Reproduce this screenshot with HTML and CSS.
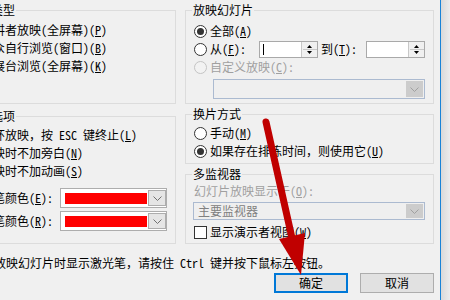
FILE: index.html
```html
<!DOCTYPE html>
<html lang="zh-CN">
<head>
<meta charset="utf-8">
<title>设置放映方式</title>
<link rel="stylesheet" href="styles.css">
</head>
<body>
<div class="screen">
  <div class="dialog">
    <div class="cols">
      <div class="col">
        <fieldset class="group g-type">
          <legend>放映类型</legend>
          <div class="row"><span class="radio checked"></span><span>演讲者放映(全屏幕)(<u>P</u>)</span></div>
          <div class="row"><span class="radio"></span><span>观众自行浏览(窗口)(<u>B</u>)</span></div>
          <div class="row"><span class="radio"></span><span>在展台浏览(全屏幕)(<u>K</u>)</span></div>
        </fieldset>
        <fieldset class="group g-opts">
          <legend>放映选项</legend>
          <div class="row"><span class="check"></span><span>循环放映，按 ESC 键终止(<u>L</u>)</span></div>
          <div class="row"><span class="check"></span><span>放映时不加旁白(<u>N</u>)</span></div>
          <div class="row"><span class="check"></span><span>放映时不加动画(<u>S</u>)</span></div>
          <div class="color-row first">
            <span class="lbl">绘图笔颜色(<u>E</u>):</span>
            <span class="color-pick"><span class="swatch"></span><span class="cp-btn"><svg width="9" height="5" viewBox="0 0 9 5"><path d="M0.5 0.5 L4.5 4.5 L8.5 0.5" fill="none" stroke="#707070" stroke-width="1"/></svg></span></span>
          </div>
          <div class="color-row">
            <span class="lbl">激光笔颜色(<u>R</u>):</span>
            <span class="color-pick"><span class="swatch"></span><span class="cp-btn"><svg width="9" height="5" viewBox="0 0 9 5"><path d="M0.5 0.5 L4.5 4.5 L8.5 0.5" fill="none" stroke="#707070" stroke-width="1"/></svg></span></span>
          </div>
        </fieldset>
      </div>
      <div class="col">
        <fieldset class="group g-slides">
          <legend>放映幻灯片</legend>
          <div class="row"><span class="radio checked"></span><span>全部(<u>A</u>)</span></div>
          <div class="row">
            <span class="radio"></span><span class="from-lbl">从(<u>F</u>):</span>
            <span class="spin"><span class="caret"></span><span class="spin-btns"><svg width="15" height="15" viewBox="0 0 15 15"><path d="M5 6 L7.5 3 L10 6 Z" fill="#000"/><path d="M1 7.5 H15" stroke="#c8c8c8" stroke-width="1"/><path d="M5 9 L10 9 L7.5 12 Z" fill="#000"/></svg></span></span>
            <span class="to-lbl">到(<u>T</u>):</span>
            <span class="spin"><span></span><span class="spin-btns"><svg width="15" height="15" viewBox="0 0 15 15"><path d="M5 6 L7.5 3 L10 6 Z" fill="#000"/><path d="M1 7.5 H15" stroke="#c8c8c8" stroke-width="1"/><path d="M5 9 L10 9 L7.5 12 Z" fill="#000"/></svg></span></span>
          </div>
          <div class="row dis"><span class="radio disabled"></span><span>自定义放映(<u>C</u>):</span></div>
          <div class="combo custom"><span class="combo-text"></span><span class="cbtn"><svg width="9" height="5" viewBox="0 0 9 5"><path d="M0.5 0.5 L4.5 4.5 L8.5 0.5" fill="none" stroke="#a0a0a0" stroke-width="1"/></svg></span></div>
        </fieldset>
        <fieldset class="group g-adv">
          <legend>换片方式</legend>
          <div class="row"><span class="radio"></span><span>手动(<u>M</u>)</span></div>
          <div class="row"><span class="radio checked"></span><span>如果存在排练时间，则使用它(<u>U</u>)</span></div>
        </fieldset>
        <fieldset class="group g-mon">
          <legend>多监视器</legend>
          <div class="row label-row dis"><span>幻灯片放映显示于(<u>O</u>):</span></div>
          <div class="combo monitor"><span class="combo-text">主要监视器</span><span class="cbtn"><svg width="9" height="5" viewBox="0 0 9 5"><path d="M0.5 0.5 L4.5 4.5 L8.5 0.5" fill="none" stroke="#a0a0a0" stroke-width="1"/></svg></span></div>
          <div class="row check-row"><span class="check white"></span><span>显示演示者视图(<u>W</u>)</span></div>
        </fieldset>
      </div>
    </div>
    <p class="hint">若要在放映幻灯片时显示激光笔，请按住 Ctrl 键并按下鼠标左按钮。</p>
    <div class="buttons">
      <button class="btn default" type="button">确定</button>
      <button class="btn" type="button">取消</button>
    </div>
  </div>
  <div class="shadow"></div>
  <svg class="arrow" width="450" height="300" viewBox="0 0 450 300">
    <line x1="266" y1="122" x2="292" y2="238" stroke="#c00000" stroke-width="7" stroke-linecap="round"/>
    <polygon points="279,239 305,233 301,275" fill="#c00000"/>
  </svg>
</div>
</body>
</html>
```

FILE: styles.css
```css
* { box-sizing: border-box; }
html, body { margin: 0; padding: 0; }
body {
  width: 450px;
  height: 300px;
  overflow: hidden;
  background: #f0f0f0;
  font-family: "Noto Sans Mono CJK SC", "Noto Sans CJK SC", sans-serif;
  font-size: 12px;
  line-height: 14px;
  color: #000;
}
u { text-decoration: underline; text-underline-offset: 1px; }

.screen {
  position: relative;
  display: flex;
  width: 450px;
  height: 300px;
  overflow: hidden;
}
.dialog {
  flex: none;
  width: 491px;
  height: 300px;
  margin-left: -50px;
  padding: 3px 6px 0 6px;
  border-right: 1px solid #1883d7;
  background: #f0f0f0;
}
.shadow {
  flex: 1;
  background: linear-gradient(to right, #d9d9d9, #ececec);
}
.cols {
  display: grid;
  grid-template-columns: 220px 249px;
  column-gap: 9px;
}
.col { display: flex; flex-direction: column; }

.group {
  margin: 0;
  padding: 0 8px;
  border: 1px solid #dcdcdc;
  min-width: 0;
}
.group legend {
  padding: 0 1px;
  margin-left: -2px;
  line-height: 14px;
}
.g-type legend, .g-opts legend { margin-left: 1px; }

.row {
  display: flex;
  align-items: center;
  height: 18px;
  white-space: nowrap;
}
.radio {
  flex: none;
  width: 13px;
  height: 13px;
  margin-right: 3px;
  border: 1px solid #333;
  border-radius: 50%;
  background: #fff;
  display: grid;
  place-items: center;
}
.radio.checked::after {
  content: "";
  width: 7px;
  height: 7px;
  border-radius: 50%;
  background: #333;
}
.radio.disabled { border-color: #c4c4c4; background: #f2f2f2; }
.check {
  flex: none;
  width: 13px;
  height: 13px;
  margin-right: 3px;
  border: 1px solid #333;
  background: #fff;
}
.dis { color: #a0a0a0; }

/* 放映类型 */
.g-type { padding-top: 4px; padding-bottom: 28px; }

/* 放映选项 */
.g-opts { margin-top: 5px; padding-top: 3px; padding-bottom: 12px; }
.color-row {
  display: flex;
  align-items: center;
  height: 20px;
  padding-left: 4px;
  margin-top: 3px;
  white-space: nowrap;
}
.color-row.first { margin-top: 8px; }
.color-row .lbl { width: 91px; flex: none; }
.color-pick {
  flex: none;
  display: flex;
  align-items: center;
  width: 107px;
  height: 20px;
  padding-left: 4px;
  border: 1px solid #adadad;
  background: #fff;
}
.swatch { width: 82px; height: 11px; background: #ff0000; }
.cp-btn {
  width: 18px;
  height: 16px;
  margin-left: 1px;
  border: 1px solid #adadad;
  background: #e5e5e5;
  display: grid;
  place-items: center;
}

/* 放映幻灯片 */
.g-slides { padding-top: 5px; padding-bottom: 4px; }
.from-lbl { width: 49px; flex: none; }
.to-lbl { width: 45px; margin-left: 3px; flex: none; }
.spin {
  flex: none;
  align-self: flex-start;
  margin-top: 1px;
  width: 59px;
  height: 17px;
  border: 1px solid #a9a9a9;
  background: #fff;
  display: flex;
  justify-content: space-between;
}
.caret { width: 1px; height: 11px; margin: 2px 0 0 3px; background: #000; }
.spin-btns {
  width: 16px;
  border-left: 1px solid #c8c8c8;
  background: #f0f0f0;
  display: flex;
}
.combo {
  display: flex;
  justify-content: space-between;
  border: 1px solid #abbad0;
  background: #efefef;
  color: #808080;
  white-space: nowrap;
}
.combo-text { padding-left: 4px; align-self: center; }
.cbtn {
  width: 17px;
  margin: 1px;
  background: #cccccc;
  display: grid;
  place-items: center;
}
.combo.custom { width: 212px; height: 20px; margin: 3px 0 0 19px; }

/* 换片方式 */
.g-adv { margin-top: 3px; padding-top: 3px; padding-bottom: 3px; }

/* 多监视器 */
.g-mon { margin-top: 3px; padding-top: 0; padding-bottom: 2px; }
.label-row { height: 19px; }
.combo.monitor { width: 232px; height: 18px; margin: 2px 0 0 -1px; }
.check-row { margin-top: 3px; }

.hint {
  margin: 12px 0 0 2px;
  line-height: 14px;
  white-space: nowrap;
}
.buttons {
  display: flex;
  justify-content: flex-end;
  gap: 12px;
  margin-top: 3px;
}
.btn {
  width: 74px;
  height: 20px;
  padding: 0;
  border: 1px solid #adadad;
  background: #e1e1e1;
  font: inherit;
  color: #000;
  display: flex;
  align-items: center;
  justify-content: center;
}
.btn.default { border: 2px solid #0078d7; }

.arrow {
  position: absolute;
  left: 0;
  top: 0;
  pointer-events: none;
}
```
